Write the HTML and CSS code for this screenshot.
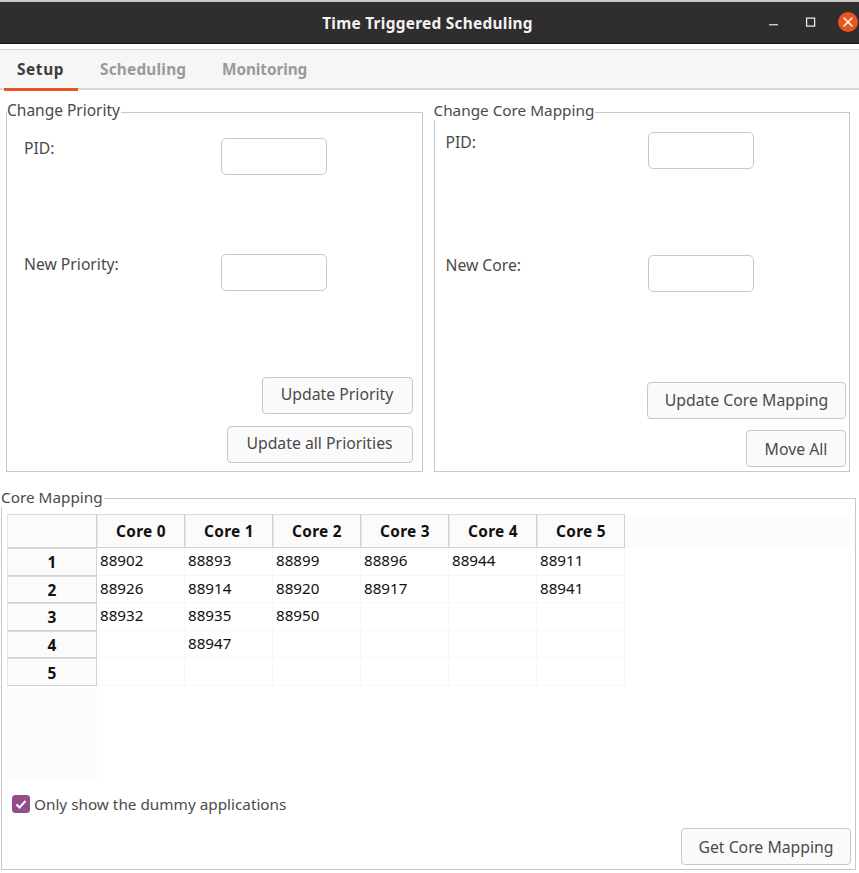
FILE: index.html
```html
<!DOCTYPE html>
<html lang="en">
<head>
<meta charset="utf-8">
<title>Time Triggered Scheduling</title>
<link rel="stylesheet" href="styles.css">
</head>
<body>
<div class="window">
  <header class="titlebar">
    <span class="title">Time Triggered Scheduling</span>
    <div class="controls">
      <svg class="ctl ctl-min" width="14" height="14" viewBox="0 0 14 14"><rect x="2" y="9" width="9" height="1.4" fill="#c8c8c8"/></svg>
      <svg class="ctl" width="14" height="14" viewBox="0 0 14 14"><rect x="2.6" y="3.1" width="8" height="8" fill="none" stroke="#e6e6e6" stroke-width="1.3"/></svg>
      <svg class="close" width="20" height="20" viewBox="0 0 20 20"><circle cx="10" cy="10" r="10" fill="#e95420"/><path d="M6 6l8 8M14 6l-8 8" stroke="#fff" stroke-width="1.5" stroke-linecap="round"/></svg>
    </div>
  </header>
  <nav class="tabs">
    <span class="tab active">Setup</span>
    <span class="tab">Scheduling</span>
    <span class="tab tab-last">Monitoring</span>
  </nav>
  <main class="content">
    <div class="top-groups">
      <section class="group group-priority">
        <span class="legend">Change Priority</span>
        <div class="field"><label class="field-label">PID:</label><input class="input"></div>
        <div class="field"><label class="field-label">New Priority:</label><input class="input"></div>
        <div class="actions">
          <button class="btn btn-priority">Update Priority</button>
          <button class="btn btn-all">Update all Priorities</button>
        </div>
      </section>
      <section class="group group-core">
        <span class="legend">Change Core Mapping</span>
        <div class="field"><label class="field-label">PID:</label><input class="input"></div>
        <div class="field"><label class="field-label">New Core:</label><input class="input"></div>
        <div class="actions">
          <button class="btn btn-mapping">Update Core Mapping</button>
          <button class="btn btn-move">Move All</button>
        </div>
      </section>
    </div>
    <section class="group group-mapping">
      <span class="legend">Core Mapping</span>
      <div class="table-view">
        <div class="grid">
          <div class="head corner"></div>
          <div class="head">Core 0</div><div class="head">Core 1</div><div class="head">Core 2</div><div class="head">Core 3</div><div class="head">Core 4</div><div class="head">Core 5</div>
          <div class="head row">1</div><div class="cell">88902</div><div class="cell">88893</div><div class="cell">88899</div><div class="cell">88896</div><div class="cell">88944</div><div class="cell">88911</div>
          <div class="head row">2</div><div class="cell">88926</div><div class="cell">88914</div><div class="cell">88920</div><div class="cell">88917</div><div class="cell"></div><div class="cell">88941</div>
          <div class="head row">3</div><div class="cell">88932</div><div class="cell">88935</div><div class="cell">88950</div><div class="cell"></div><div class="cell"></div><div class="cell"></div>
          <div class="head row">4</div><div class="cell"></div><div class="cell">88947</div><div class="cell"></div><div class="cell"></div><div class="cell"></div><div class="cell"></div>
          <div class="head row">5</div><div class="cell"></div><div class="cell"></div><div class="cell"></div><div class="cell"></div><div class="cell"></div><div class="cell"></div>
        </div>
      </div>
      <label class="check">
        <svg width="18" height="18" viewBox="0 0 18 18"><rect width="18" height="18" rx="3.5" fill="#924d8b"/><path d="M4.5 9.5l3 3 6-6.5" fill="none" stroke="#fff" stroke-width="2"/></svg>
        <span>Only show the dummy applications</span>
      </label>
      <div class="footer"><button class="btn btn-get">Get Core Mapping</button></div>
    </section>
  </main>
</div>
</body>
</html>
```
FILE: styles.css
```css
* { box-sizing: border-box; }
html, body { margin: 0; height: 100%; background: #fff; }
body { font-family: "Noto Sans", sans-serif; font-size: 15.3px; color: #4a4a4a; overflow: hidden; }
.window { width: 859px; height: 873px; display: flex; flex-direction: column; }
.titlebar { height: 44px; border-top: 2px solid #c9c9c9; background: #2f2d2d; border-bottom: 1px solid #141414; color: #f2f2f2; display: flex; align-items: center; justify-content: center; position: relative; padding: 2px 4px 0 0; }
.title { font-weight: 700; font-size: 15.4px; letter-spacing: 0.28px; }
.controls { position: absolute; right: 1px; top: 10px; display: flex; align-items: center; gap: 20px; }
.ctl-min { margin-right: 3px; }
.tabs { margin-top: 5px; height: 41px; background: #f6f6f6; border-top: 1px solid #d5d5d5; border-bottom: 2px solid #d8d8d8; display: flex; padding-left: 4px; gap: 8px; }
.tab { width: 114px; height: 41px; padding: 9px 0 0 14px; font-weight: 700; font-size: 15.4px; letter-spacing: 0.2px; color: #9a9a9a; }
.tab-last { letter-spacing: -0.1px; }
.tab.active { width: 74px; padding-left: 13px; letter-spacing: 0.6px; color: #3d3d3d; border-bottom: 3px solid #e95420; }
.content { flex: 1; display: flex; flex-direction: column; }
.top-groups { display: flex; gap: 11px; padding: 22px 9px 0 6px; }
.group { position: relative; border: 1px solid #c8c8c8; }
.legend { position: absolute; left: -1px; top: -12px; background: #fff; line-height: 20px; padding-right: 1px; }
.top-groups .legend { top: -13px; }
.group-priority .legend { left: 0; font-size: 15.5px; }
.group-priority { width: 417px; height: 360px; padding: 25px 9px 0 17px; }
.group-core { width: 417px; height: 360px; padding: 19px 3px 0 11px; }
.field { display: flex; height: 37px; margin-bottom: 79px; }
.group-core .field { margin-bottom: 86px; }
.field-label { width: 197px; line-height: 20px; font-size: 15.7px; }
.group-core .field-label { width: 202px; }
.input { width: 106px; height: 37px; background: #fff; border: 1px solid #c8c8c8; border-radius: 5px; }
.actions { display: flex; flex-direction: column; align-items: flex-end; gap: 12px; margin-top: 7px; padding-top: 7px; }
.group-core .actions { gap: 11px; margin-top: 0; padding-top: 4px; }
.btn { height: 37px; background: #fafafa; border: 1px solid #c8c8c8; border-radius: 4px; font: inherit; font-size: 15.8px; color: #4a4a4a; padding: 0; }
.btn-priority { width: 151px; padding-bottom: 3px; }
.btn-all { width: 186px; padding-bottom: 3px; }
.btn-mapping { width: 199px; padding-bottom: 2px; }
.btn-move { width: 100px; }
.group-mapping { margin: 26px 3px 0 1px; height: 372px; padding: 15px 5px 0 5px; }
.table-view { height: 268px; background-color: #fff; background-image: linear-gradient(#fcfcfc, #fcfcfc), linear-gradient(#fcfcfc, #fcfcfc); background-repeat: no-repeat; background-size: 100% 34px, 90px 100%; }
.grid { display: grid; grid-template-columns: 90px repeat(6, 88px); grid-template-rows: 34px repeat(5, 27.6px); width: 618px; }
.head { background: #fbfbfb; border: 1px solid #d2d2d2; border-left-color: #e6e6e6; border-top-color: #dcdcdc; color: #111; font-weight: 700; font-size: 15.4px; letter-spacing: 0.3px; display: flex; align-items: center; justify-content: center; }
.head.row { padding-top: 2px; }
.cell { border-right: 1px solid #f7f7f7; border-bottom: 1px solid #f7f7f7; color: #111; font-size: 15.2px; line-height: 25px; padding-left: 3px; }
.check { display: flex; align-items: center; gap: 4px; margin: 12px 0 0 5px; height: 20px; }
.footer { display: flex; justify-content: flex-end; margin: 14px -1px 0 0; }
.btn-get { width: 170px; }
```
